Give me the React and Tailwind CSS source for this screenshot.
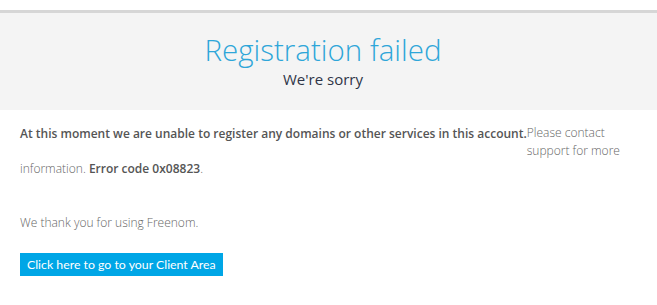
export default function App() {
  return (
    <div className="min-h-[305px] w-full bg-white font-['Open_Sans',sans-serif]">
      <div className="h-[10px]" />
      <div className="border-t-[3px] border-[#d6d6d6] bg-[#f4f4f4] pb-[21px] pr-[11px] pt-[18px] text-center">
        <h1 className="text-[29.5px] font-light leading-[38px] text-[#2ea6d9]">Registration failed</h1>
        <div className="text-[15px] leading-[20px] text-[#2f3447]">We're sorry</div>
      </div>
      <div className="px-[20px] pt-[14px]">
        <p className="text-[12px] leading-[18px] text-[#666]">
          <span className="align-middle font-semibold text-[#555]">At this moment we are unable to register any domains or other services in this account.</span>
          <span className="inline-block w-[100px] align-top font-light">Please contact support for more</span>
          <br />
          <span className="inline-block font-light">information. </span>{' '}
          <span className="font-semibold text-[#555]">Error code 0x08823</span>
          <span className="font-light">.</span>
        </p>
        <p className="mt-[36px] text-[12px] font-light leading-[18px] text-[#666]">We thank you for using Freenom.</p>
        <button className="mt-[21px] bg-[#00a6e6] px-[7px] py-[3px] font-['Lato',sans-serif] text-[12.3px] leading-[17px] text-white">
          Click here to go to your Client Area
        </button>
      </div>
    </div>
  )
}
